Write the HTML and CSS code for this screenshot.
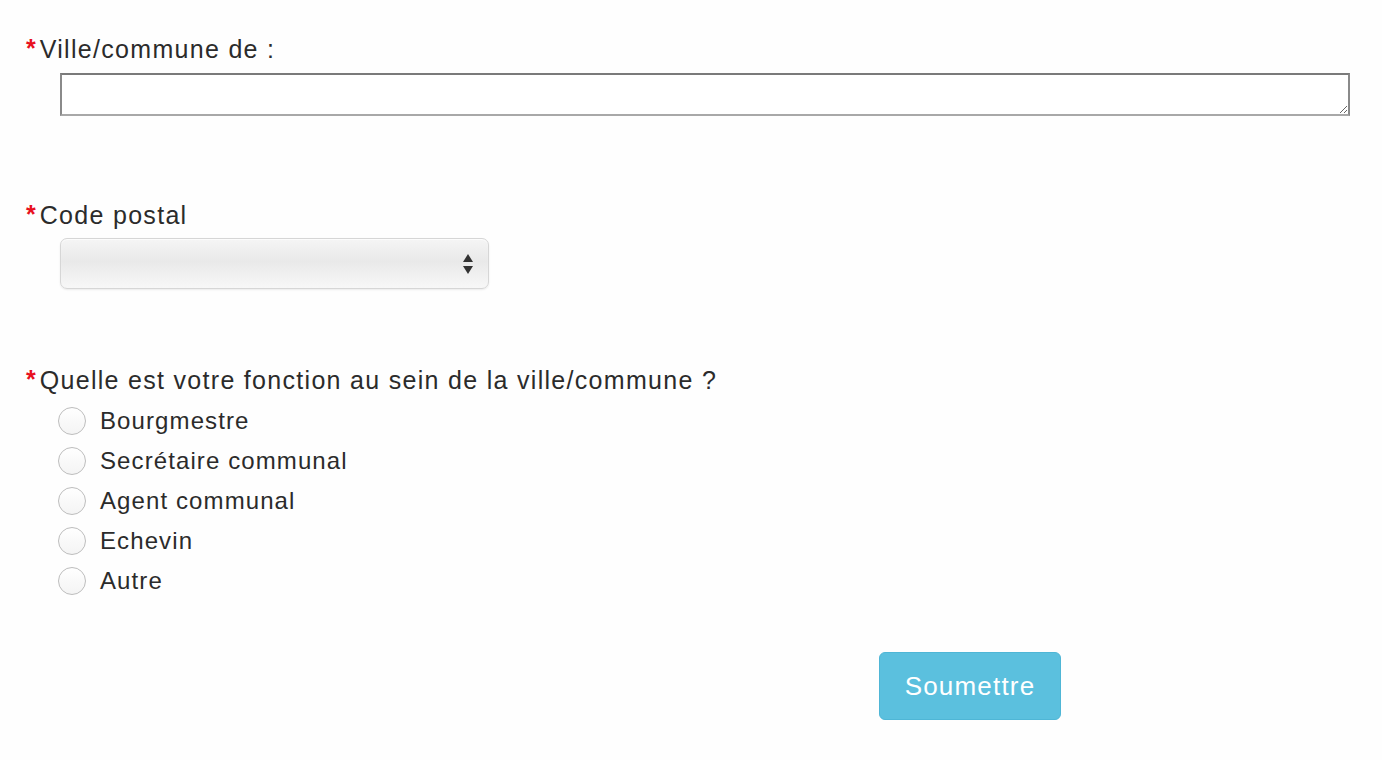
FILE: index.html
```html
<!DOCTYPE html>
<html lang="fr">
<head>
    <meta charset="UTF-8">
    <meta name="viewport" content="width=device-width, initial-scale=1.0">
    <title>Formulaire</title>
    <link rel="stylesheet" href="styles.css">
</head>
<body>
    <form class="form">
        <div class="field">
            <label class="label"><span class="req">*</span>Ville/commune de :</label>
            <div class="control">
                <textarea class="textarea"></textarea>
            </div>
        </div>

        <div class="field field-select">
            <label class="label"><span class="req">*</span>Code postal</label>
            <div class="control">
                <div class="select">
                    <span class="arrows">
                        <svg width="12" height="24" viewBox="0 0 12 24">
                            <path d="M6 2 L11 10 L1 10 Z" fill="#333"/>
                            <path d="M1 14 L11 14 L6 22 Z" fill="#333"/>
                        </svg>
                    </span>
                </div>
            </div>
        </div>

        <div class="field field-radio">
            <label class="label"><span class="req">*</span>Quelle est votre fonction au sein de la ville/commune ?</label>
            <div class="control radios">
                <label class="radio"><span class="circle"></span>Bourgmestre</label>
                <label class="radio"><span class="circle"></span>Secrétaire communal</label>
                <label class="radio"><span class="circle"></span>Agent communal</label>
                <label class="radio"><span class="circle"></span>Echevin</label>
                <label class="radio"><span class="circle"></span>Autre</label>
            </div>
        </div>

        <div class="actions">
            <button type="button" class="btn">Soumettre</button>
        </div>
    </form>
</body>
</html>
```

FILE: styles.css
```css
body {
    margin: 0;
    background: #fefefe;
    font-family: 'Liberation Sans', Arial, sans-serif;
    color: #2b2b2b;
}
.form {
    padding: 34px 32px 0 26px;
}
.label {
    display: block;
    font-size: 25px;
    line-height: 28px;
    letter-spacing: 1.3px;
}
.req {
    color: #e8101e;
    font-weight: bold;
    font-size: 25px;
    letter-spacing: 0;
    margin-right: 4px;
    vertical-align: 1px;
}
.control {
    padding-left: 34px;
}
.textarea {
    display: block;
    box-sizing: border-box;
    width: 100%;
    height: 43px;
    margin-top: 10px;
    border: 2px solid #8a8a8a;
    border-top-color: #7a7a7a;
    border-bottom-color: #a8a8a8;
    background: #fff;
    resize: vertical;
    font-family: inherit;
}
.field-select {
    margin-top: 84px;
}
.select {
    box-sizing: border-box;
    width: 429px;
    height: 51px;
    margin-top: 9px;
    border: 1px solid #d6d6d6;
    border-radius: 7px;
    background: linear-gradient(#f5f5f5, #e9e9e9 45%, #f7f7f7);
    box-shadow: inset 0 1px 1px rgba(255, 255, 255, 0.8), 0 1px 2px rgba(0, 0, 0, 0.08);
    display: flex;
    align-items: center;
    justify-content: flex-end;
    padding-right: 14px;
}
.arrows svg {
    display: block;
}
.field-radio {
    margin-top: 76px;
}
.radios {
    padding-left: 32px;
    margin-top: 7px;
}
.radio {
    display: flex;
    align-items: center;
    height: 40px;
    font-size: 24px;
    letter-spacing: 1.1px;
}
.circle {
    box-sizing: border-box;
    width: 28px;
    height: 28px;
    border: 1px solid #bdbdbd;
    border-radius: 50%;
    background: linear-gradient(#fff, #f4f4f4);
    margin-right: 14px;
}
.actions {
    padding-left: 853px;
    margin-top: 51px;
}
.btn {
    width: 182px;
    height: 68px;
    background: #5bc0de;
    color: #fff;
    border: 1px solid #4fb6d6;
    border-radius: 6px;
    font-family: 'Liberation Sans', Arial, sans-serif;
    font-size: 26px;
    letter-spacing: 1.2px;
    cursor: pointer;
}
```
